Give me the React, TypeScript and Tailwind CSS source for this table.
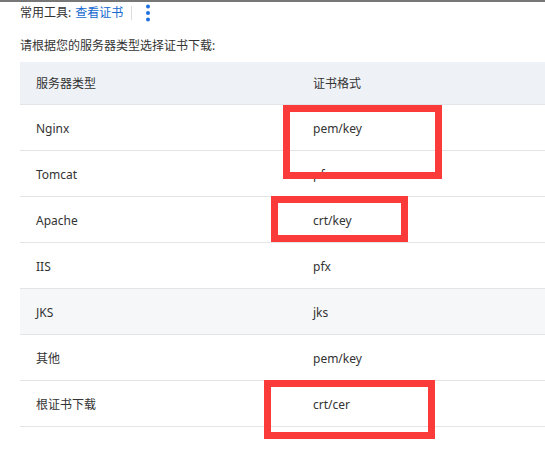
const rows = [
  { type: "Nginx", format: "pem/key" },
  { type: "Tomcat", format: "pfx" },
  { type: "Apache", format: "crt/key" },
  { type: "IIS", format: "pfx" },
  { type: "JKS", format: "jks", hover: true },
  { type: "其他", format: "pem/key" },
  { type: "根证书下载", format: "crt/cer" },
];

function MoreIcon() {
  return (
    <svg width="6" height="20" viewBox="0 0 6 20" className="ml-[13px]">
      <circle cx="3" cy="3.5" r="2" fill="#1f6fde" />
      <circle cx="3" cy="10" r="2" fill="#1f6fde" />
      <circle cx="3" cy="16.5" r="2" fill="#1f6fde" />
    </svg>
  );
}

export default function App() {
  return (
    <div className="relative w-[545px] h-[459px] overflow-hidden bg-white text-[12px] text-[#333] font-['Noto_Sans','Noto_Sans_CJK_SC',sans-serif]">
      <div className="h-[2px] bg-[#777]" />

      <div className="flex items-center h-[22px] pl-5">
        <span>常用工具:</span>
        <a className="ml-1 text-[#1668cf] cursor-pointer">查看证书</a>
        <span className="ml-[8px] h-[14px] w-px bg-[#dcdcdc]" />
        <MoreIcon />
      </div>

      <p className="mt-[13px] pl-5 leading-[18px]">请根据您的服务器类型选择证书下载:</p>

      <div className="mt-[7px] ml-5 w-[554px]">
        <div className="flex h-[43px] items-center pt-[2px] bg-[#eef1f6] border-b border-[#e2e4e8]">
          <div className="w-1/2 pl-4">服务器类型</div>
          <div className="w-1/2 pl-4">证书格式</div>
        </div>
        {rows.map((r) => (
          <div
            key={r.type}
            className={`flex h-[46px] items-center pt-[3px] border-b border-[#e2e4e8] ${r.hover ? "bg-[#f6f7f9]" : "bg-white"}`}
          >
            <div className="w-1/2 pl-4">{r.type}</div>
            <div className="w-1/2 pl-4">{r.format}</div>
          </div>
        ))}
      </div>

      {/* annotation boxes */}
      <div className="absolute left-[283px] top-[105px] w-[159px] h-[74px] border-[7px] border-[#fb3a3a]" />
      <div className="absolute left-[271px] top-[196px] w-[137px] h-[46px] border-[7px] border-[#fb3a3a]" />
      <div className="absolute left-[264px] top-[380px] w-[171px] h-[59px] border-[7px] border-[#fb3a3a]" />
    </div>
  );
}
